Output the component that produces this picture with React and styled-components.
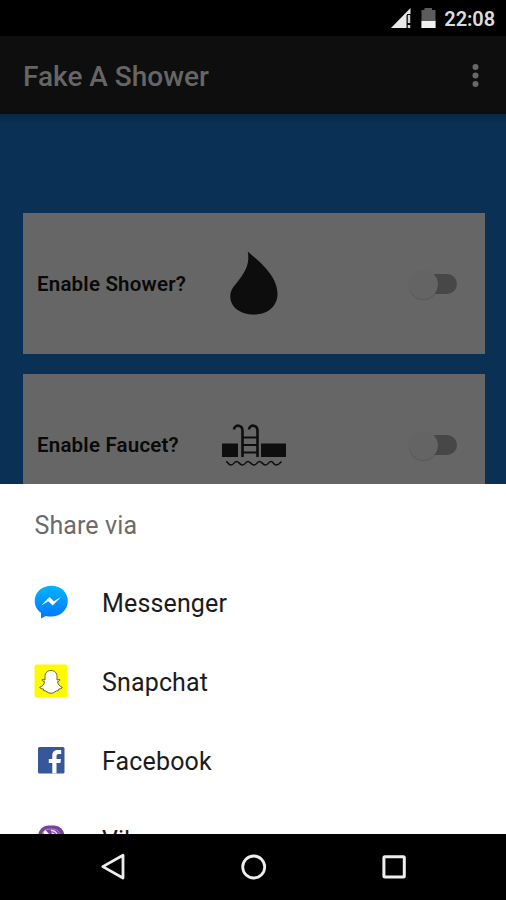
import React from 'react';
import styled, { createGlobalStyle } from 'styled-components';

const GlobalStyle = createGlobalStyle`
  * { box-sizing: border-box; }
  body { margin: 0; background: #000; font-family: Roboto, "Noto Sans", sans-serif; }
  svg { display: block; flex: none; }
`;

const Screen = styled.div`
  display: flex;
  flex-direction: column;
  width: 506px;
  height: 900px;
  overflow: hidden;
  background: #000;
`;

const StatusBar = styled.div`
  display: flex;
  align-items: center;
  justify-content: flex-end;
  height: 36px;
  flex: none;
  padding: 0 11px 0 0;
  color: #dcdcdc;
`;

const Clock = styled.span`
  margin-left: 8px;
  padding-top: 2px;
  font-size: 20px;
  line-height: 24px;
  font-weight: 600;
  letter-spacing: -0.1px;
`;

const BatteryWrap = styled.div`
  margin-left: 9px;
`;

const AppBar = styled.header`
  display: flex;
  align-items: center;
  justify-content: space-between;
  height: 78px;
  flex: none;
  padding: 2px 27px 0 23px;
  background: #0e0e0e;
`;

const Title = styled.h1`
  margin: 0;
  padding-top: 2px;
  font-size: 28px;
  line-height: 36px;
  font-weight: 500;
  color: #666;
`;

const Content = styled.main`
  display: flex;
  flex-direction: column;
  gap: 20.5px;
  height: 370px;
  flex: none;
  overflow: hidden;
  padding: 99px 21.5px 0 23px;
  background: linear-gradient(#082744 0, #0a3056 9px);
`;

const Card = styled.section`
  display: grid;
  grid-template-columns: 180px 70px 1fr;
  align-items: center;
  height: 140.5px;
  flex: none;
  padding: 0 27.5px 0 14px;
  background: #666;
`;

const CardLabel = styled.span`
  padding-top: 2px;
  font-size: 20.5px;
  line-height: 28px;
  font-weight: 600;
  letter-spacing: 0.2px;
  color: #090909;
  white-space: nowrap;
`;

const ToggleTrack = styled.div`
  display: flex;
  align-items: center;
  justify-self: end;
  width: 46px;
  height: 20px;
  margin-top: 2px;
  border-radius: 10px;
  background: #474747;
`;

const ToggleThumb = styled.div`
  width: 29px;
  height: 29px;
  margin-left: -2px;
  flex: none;
  border-radius: 50%;
  background: #646464;
  box-shadow: 0 1px 1px rgba(0, 0, 0, 0.14);
`;

const Sheet = styled.div`
  height: 349.5px;
  flex: none;
  overflow: hidden;
  background: #fff;
`;

const SheetTitle = styled.h2`
  display: flex;
  align-items: flex-end;
  height: 79px;
  margin: 0;
  padding-left: 34.5px;
  font-size: 25px;
  line-height: 74px;
  font-weight: 400;
  letter-spacing: 0.1px;
  color: #6b6b6b;
`;

const Row = styled.div`
  display: flex;
  align-items: center;
  height: 78.85px;
  padding-left: 34px;
`;

const RowLabel = styled.span`
  margin-left: 34px;
  padding-top: 4px;
  font-size: 25px;
  line-height: 32px;
  letter-spacing: 0.15px;
  color: #1b1b1b;
`;

const NavBar = styled.nav`
  display: flex;
  justify-content: space-between;
  flex: 1;
  padding: 18px 97px 0 98px;
  background: #000;
`;

const Signal = () => (
  <svg width="21" height="22" viewBox="0 0 21 22">
    <path d="M0 21 19.5 1V7H16V21Z" fill="#e9e9e9" />
    <path d="M15.5 8v13" stroke="#777" strokeWidth="1" />
    <path d="M18 8v8M18 18v3" stroke="#d4d4d4" strokeWidth="2.5" />
  </svg>
);

const Battery = () => (
  <svg width="15" height="22" viewBox="0 0 15 22">
    <path d="M.5 3h3V1h7.5v2h3.5v18H.5Z" fill="#5c5c5c" />
    <path d="M.5 14h14v7H.5Z" fill="#f1f1f1" />
  </svg>
);

const MoreDots = () => (
  <svg width="7" height="24" viewBox="0 0 7 24" fill="#686868">
    <circle cx="3.5" cy="3" r="3" />
    <circle cx="3.5" cy="11.5" r="3" />
    <circle cx="3.5" cy="20" r="3" />
  </svg>
);

const Drop = () => (
  <svg width="70" height="70" viewBox="0 0 70 70">
    <path d="M30.8 3.5C34 7 42 12 48 19.5C56 28 60.5 37 60.5 46C60.5 58 51 66.5 37 66.5C23 66.5 13.3 59 13.3 48.5C13.3 41 18 37.5 23 30.5C30 21 32.5 14 30.8 3.5Z" fill="#0d0d0d" />
  </svg>
);

const Pool = () => (
  <svg width="70" height="70" viewBox="0 -1 70 70" fill="none" stroke="#0e0e0e">
    <path d="M5 33.5h16V47H5ZM44 33.5h25V47H44Z" fill="#0e0e0e" stroke="none" />
    <path d="M17 19.5c0-3 3-4.500 5.500-3.500 2.500.5 3 2.500 3 5V47M32 19.500c0-3 3-4.500 5.500-3.500 2.500.5 3 2.500 3 5V47" strokeWidth="2.6" />
    <path d="M25.5 27.5h15M25.5 35h15M25.5 42.5h15" strokeWidth="2" />
    <path d="M9 51.500c2 0 2 3.500 5 3.500s3-3.500 5.500-3.500 3 3.500 6 3.500 3-3.500 5.500-3.500 3 3.500 6 3.500 3-3.500 5.500-3.500 3 3.500 6 3.500 3-3.500 5.500-3.500 2.500 3.500 5 3.500 4-2 5.500-3.500" strokeWidth="1.5" />
  </svg>
);

const Messenger = () => (
  <svg width="34" height="34" viewBox="0 0 34 34">
    <defs>
      <linearGradient id="messengerBlue" x2="0" y2="1">
        <stop stopColor="#00b5ff" />
        <stop offset="1" stopColor="#0076ff" />
      </linearGradient>
    </defs>
    <path d="M17.500.7C8 .7.700 7.200.700 16c0 5 2.500 9 6.300 11.800V33.500l5-2.600c1.700.4 3.500.6 5.500.6 9.200 0 16.300-6.600 16.300-15.500S26.700.700 17.500.700Z" fill="url(#messengerBlue)" />
    <path d="M7.3 20.5 15.5 12l4.3 4.3L27 12l-8.300 8.400-4.400-4.200Z" fill="#fff" />
  </svg>
);

const Snapchat = () => (
  <svg width="34" height="34" viewBox="0 0 34 34">
    <rect x=".5" y=".5" width="33" height="33" rx="2.5" fill="#fffa00" />
    <path d="M17 6.500c-4 0-6 2.800-6 6v3.500l-2.800-.5c-.5.800.5 1.700 2.300 2.300-.5 2.700-2 4.500-4.800 5.500.3 1.300 2 1.500 3.600 1.800l.5 1.600c2.700-.5 3.500 2.600 7.200 2.600s4.500-3.100 7.200-2.600l.5-1.600c1.600-.3 3.300-.5 3.600-1.800-2.800-1-4.300-2.800-4.800-5.500 1.800-.6 2.800-1.500 2.300-2.300L23 16v-3.500c0-3.200-2-6-6-6Z" fill="#fff" stroke="#55551b" strokeWidth=".9" strokeLinejoin="round" />
  </svg>
);

const Facebook = () => (
  <svg width="34" height="34" viewBox="0 0 34 34">
    <rect x="4" y="4" width="26.5" height="26.5" rx="1.5" fill="#37579b" />
    <path d="M18.3 30.5V20h-3.500v-4h3.500v-3.200c0-4 2.200-5.700 5.700-5.700h3.200V11h-2.400c-1.700 0-2.300.8-2.300 2.300V16h4.500l-.6 4h-3.900v10.500Z" fill="#fff" />
  </svg>
);

const Viber = () => (
  <svg width="34" height="34" viewBox="0 0 34 34">
    <rect x="4.3" y="3.5" width="26" height="26" rx="10" fill="#7a419a" />
    <path d="M8 15c0-5 2-8 9-8s9 3 9 8" fill="none" stroke="#b58cc8" strokeWidth="1" />
    <path d="M9.500 14V10l2-2 3.500 4v2c2 5 4 7 7 8l3 3-3 2c-7-1-12.500-7-12.500-13Z" fill="#fff" />
    <path d="M17 8.500c4 0 6 2 6.500 6M17.500 11c2 0 3 1 3.200 3" fill="none" stroke="#ead9f0" strokeWidth="1.5" />
  </svg>
);

const BackIcon = () => (
  <svg width="30" height="30" viewBox="0 0 30 30">
    <path d="M4.800 14.600 25 3.200v22.800Z" fill="none" stroke="#eee" strokeWidth="2.8" strokeLinejoin="round" />
  </svg>
);

const HomeIcon = () => (
  <svg width="30" height="30" viewBox="0 0 30 30">
    <circle cx="14.7" cy="15" r="11" fill="none" stroke="#eee" strokeWidth="2.8" />
  </svg>
);

const RecentsIcon = () => (
  <svg width="30" height="30" viewBox="0 0 30 30">
    <rect x="4.9" y="4.7" width="20.4" height="20.4" rx="1" fill="none" stroke="#eee" strokeWidth="3" />
  </svg>
);

const Toggle = () => (
  <ToggleTrack><ToggleThumb /></ToggleTrack>
);

export default function App() {
  return (
    <Screen>
      <GlobalStyle />
      <StatusBar>
        <Signal />
        <BatteryWrap><Battery /></BatteryWrap>
        <Clock>22:08</Clock>
      </StatusBar>
      <AppBar>
        <Title>Fake A Shower</Title>
        <MoreDots />
      </AppBar>
      <Content>
        <Card><CardLabel>Enable Shower?</CardLabel><Drop /><Toggle /></Card>
        <Card><CardLabel>Enable Faucet?</CardLabel><Pool /><Toggle /></Card>
      </Content>
      <Sheet>
        <SheetTitle>Share via</SheetTitle>
        <Row><Messenger /><RowLabel>Messenger</RowLabel></Row>
        <Row><Snapchat /><RowLabel>Snapchat</RowLabel></Row>
        <Row><Facebook /><RowLabel>Facebook</RowLabel></Row>
        <Row><Viber /><RowLabel>Viber</RowLabel></Row>
      </Sheet>
      <NavBar><BackIcon /><HomeIcon /><RecentsIcon /></NavBar>
    </Screen>
  );
}
